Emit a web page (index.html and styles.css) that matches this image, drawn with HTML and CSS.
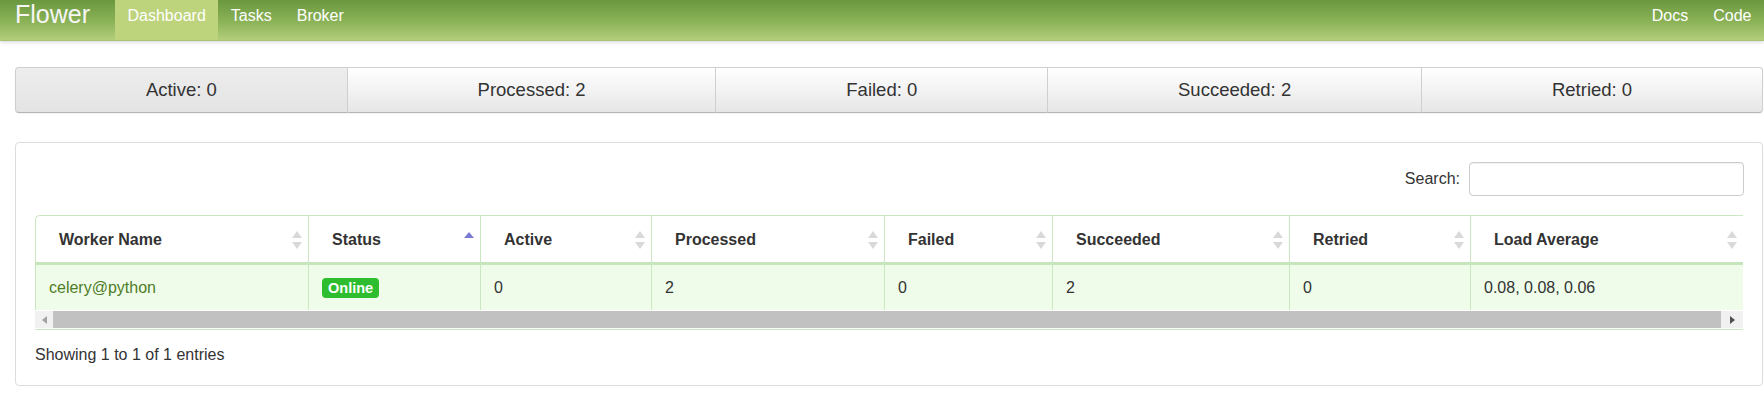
FILE: index.html
```html
<!DOCTYPE html>
<html lang="en">
<head>
<meta charset="utf-8">
<title>Flower</title>
<link rel="stylesheet" href="styles.css">
</head>
<body>
<nav class="navbar">
  <a class="brand" href="#">Flower</a>
  <ul class="nav">
    <li class="active"><a href="#">Dashboard</a></li>
    <li><a href="#">Tasks</a></li>
    <li><a href="#">Broker</a></li>
  </ul>
  <ul class="nav nav-right">
    <li><a href="#">Docs</a></li>
    <li><a href="#">Code</a></li>
  </ul>
</nav>

<main class="container">
  <div class="stats">
    <a class="stat stat-first" href="#">Active: 0</a>
    <a class="stat" href="#">Processed: 2</a>
    <a class="stat" href="#">Failed: 0</a>
    <a class="stat" href="#">Succeeded: 2</a>
    <a class="stat stat-last" href="#">Retried: 0</a>
  </div>

  <section class="panel">
    <div class="search-row">
      <label class="search-label" for="q">Search:</label>
      <input class="search-input" id="q" type="search">
    </div>

    <div class="table-wrap">
      <table class="workers">
        <colgroup>
          <col class="col-name"><col class="col-status"><col class="col-active"><col class="col-processed">
          <col class="col-failed"><col class="col-succeeded"><col class="col-retried"><col class="col-load">
        </colgroup>
        <thead>
          <tr>
            <th><div class="th-in"><span>Worker Name</span><svg class="sort" width="10" height="18" viewBox="0 0 10 18"><polygon points="5,0 10,7 0,7" fill="#d9d9d9"/><polygon points="0,11 10,11 5,18" fill="#d9d9d9"/></svg></div></th>
            <th><div class="th-in"><span>Status</span><svg class="sort" width="10" height="18" viewBox="0 0 10 18"><polygon points="5,1 10,7 0,7" fill="#7b7bd6"/></svg></div></th>
            <th><div class="th-in"><span>Active</span><svg class="sort" width="10" height="18" viewBox="0 0 10 18"><polygon points="5,0 10,7 0,7" fill="#d9d9d9"/><polygon points="0,11 10,11 5,18" fill="#d9d9d9"/></svg></div></th>
            <th><div class="th-in"><span>Processed</span><svg class="sort" width="10" height="18" viewBox="0 0 10 18"><polygon points="5,0 10,7 0,7" fill="#d9d9d9"/><polygon points="0,11 10,11 5,18" fill="#d9d9d9"/></svg></div></th>
            <th><div class="th-in"><span>Failed</span><svg class="sort" width="10" height="18" viewBox="0 0 10 18"><polygon points="5,0 10,7 0,7" fill="#d9d9d9"/><polygon points="0,11 10,11 5,18" fill="#d9d9d9"/></svg></div></th>
            <th><div class="th-in"><span>Succeeded</span><svg class="sort" width="10" height="18" viewBox="0 0 10 18"><polygon points="5,0 10,7 0,7" fill="#d9d9d9"/><polygon points="0,11 10,11 5,18" fill="#d9d9d9"/></svg></div></th>
            <th><div class="th-in"><span>Retried</span><svg class="sort" width="10" height="18" viewBox="0 0 10 18"><polygon points="5,0 10,7 0,7" fill="#d9d9d9"/><polygon points="0,11 10,11 5,18" fill="#d9d9d9"/></svg></div></th>
            <th><div class="th-in"><span>Load Average</span><svg class="sort" width="10" height="18" viewBox="0 0 10 18"><polygon points="5,0 10,7 0,7" fill="#d9d9d9"/><polygon points="0,11 10,11 5,18" fill="#d9d9d9"/></svg></div></th>
          </tr>
        </thead>
        <tbody>
          <tr>
            <td><a class="worker-link" href="#">celery@python</a></td>
            <td><span class="badge">Online</span></td>
            <td>0</td>
            <td>2</td>
            <td>0</td>
            <td>2</td>
            <td>0</td>
            <td>0.08, 0.08, 0.06</td>
          </tr>
        </tbody>
      </table>
      <div class="hscroll">
        <span class="sb-btn sb-left"><span class="arrow-left"></span></span>
        <span class="sb-thumb"></span>
        <span class="sb-btn sb-right"><span class="arrow-right"></span></span>
      </div>
    </div>

    <div class="info">Showing 1 to 1 of 1 entries</div>
  </section>
</main>
</body>
</html>
```

FILE: styles.css
```css
* { box-sizing: border-box; }

html, body {
  margin: 0;
  padding: 0;
  background: #fff;
}

body {
  font-family: "Liberation Sans", Arial, Helvetica, sans-serif;
  font-size: 16px;
  color: #333;
}

a { text-decoration: none; }

/* ---------- navbar ---------- */
.navbar {
  display: flex;
  align-items: flex-start;
  height: 41px;
  padding-left: 15px;
  background: linear-gradient(to bottom, #6a983f 0%, #8cb358 55%, #b3ce7b 100%);
  border-bottom: 1px solid #a9c474;
  box-shadow: 0 1px 4px rgba(0, 0, 0, 0.18);
}

.brand {
  font-size: 25px;
  line-height: 29px;
  color: #f6f6f6;
  margin-right: 25px;
}

.nav {
  display: flex;
  list-style: none;
  margin: 0;
  padding: 0;
  height: 40px;
}

.nav li a {
  display: block;
  height: 40px;
  padding: 0 12.5px;
  font-size: 16px;
  line-height: 31px;
  color: #fff;
}

.nav li.active a {
  background: #bdd37c;
}

.nav-right {
  margin-left: auto;
}

/* ---------- container ---------- */
.container {
  padding: 0 1px 0 15px;
}

/* ---------- stats ---------- */
.stats {
  display: flex;
  margin-top: 26px;
  height: 46px;
  border-radius: 4px;
  box-shadow: 0 1px 2px rgba(0, 0, 0, 0.06);
}

.stat {
  flex: 1 1 auto;
  display: flex;
  align-items: center;
  justify-content: center;
  font-size: 18.5px;
  color: #333;
  background: linear-gradient(to bottom, #ffffff, #e6e6e6);
  border: 1px solid #cfcfcf;
  border-bottom-color: #b5b5b5;
  border-left-width: 0;
}

.stat-first {
  border-left-width: 1px;
  border-radius: 4px 0 0 4px;
  background: linear-gradient(to bottom, #ededed, #e4e4e4);
}

.stat-last {
  border-radius: 0 4px 4px 0;
}

/* ---------- panel ---------- */
.panel {
  margin-top: 29px;
  border: 1px solid #dcdcdc;
  border-radius: 4px;
  padding: 19px 19px 20px 19px;
}

.search-row {
  display: flex;
  justify-content: flex-end;
  align-items: center;
  margin-bottom: 19px;
}

.search-label {
  font-size: 16px;
  color: #333;
  margin-right: 9px;
}

.search-input {
  width: 275px;
  height: 34px;
  border: 1px solid #cccccc;
  border-radius: 4px;
  box-shadow: inset 0 1px 1px rgba(0, 0, 0, 0.06);
  margin-right: -1px;
  font: inherit;
}

/* ---------- table ---------- */
.table-wrap {
  border-bottom: 1px solid #c9e7c0;
  padding-bottom: 1px;
}

.workers {
  width: 100%;
  table-layout: fixed;
  border-collapse: separate;
  border-spacing: 0;
}

.col-name { width: 273px; }
.col-status { width: 172px; }
.col-active { width: 171px; }
.col-processed { width: 233px; }
.col-failed { width: 168px; }
.col-succeeded { width: 237px; }
.col-retried { width: 181px; }

.workers th {
  height: 50px;
  padding: 1px 6px 0 23px;
  text-align: left;
  font-weight: bold;
  font-size: 16px;
  color: #333;
  background: #fff;
  border-top: 1px solid #c9e7c0;
  border-left: 1px solid #c9e7c0;
  border-bottom: 3px solid #c5e6ba;
}

.workers th:first-child {
  border-top-left-radius: 5px;
}

.th-in {
  display: flex;
  justify-content: space-between;
  align-items: center;
}

.sort {
  display: block;
  flex: none;
}

.workers td {
  height: 45px;
  padding: 1px 6px 0 13px;
  background: #effcea;
  border-left: 1px solid #c9e7c0;
  color: #333;
  white-space: nowrap;
}

.worker-link {
  color: #4f7d27;
}

.badge {
  display: inline-block;
  background: #2ebd2e;
  color: #fff;
  font-weight: bold;
  font-size: 14.5px;
  line-height: 20px;
  padding: 0 6px;
  border-radius: 4px;
  vertical-align: middle;
}

/* ---------- fake horizontal scrollbar ---------- */
.hscroll {
  display: flex;
  height: 17px;
  margin-top: 1px;
  background: #f1f1f1;
}

.sb-btn {
  display: flex;
  align-items: center;
  justify-content: center;
  flex: none;
}

.sb-left { width: 18px; }
.sb-right { width: 21px; }

.sb-thumb {
  flex: 1;
  background: #c1c1c1;
  margin-right: 1px;
}

.arrow-left {
  width: 0;
  height: 0;
  border-style: solid;
  border-width: 4px 5px 4px 0;
  border-color: transparent #a3a3a3 transparent transparent;
}

.arrow-right {
  width: 0;
  height: 0;
  border-style: solid;
  border-width: 4px 0 4px 5px;
  border-color: transparent transparent transparent #505050;
}

/* ---------- info ---------- */
.info {
  padding-top: 15px;
  line-height: 20px;
  font-size: 16px;
  color: #333;
}
```
